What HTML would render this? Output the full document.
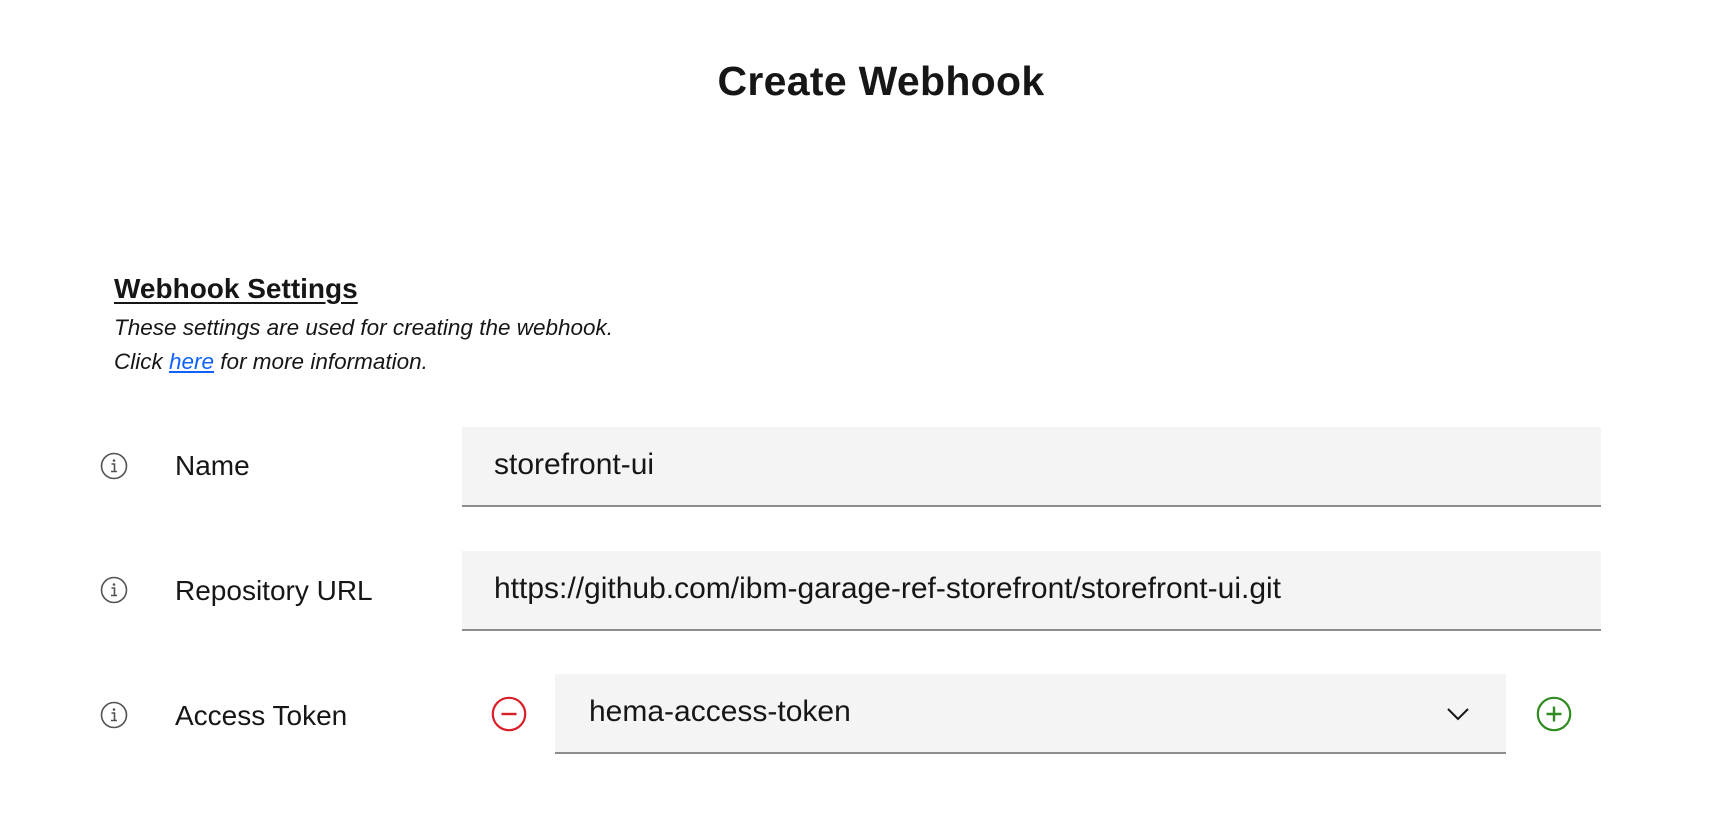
<!DOCTYPE html>
<html><head><meta charset="utf-8"><style>
html,body{margin:0;padding:0;background:#fff;width:1731px;height:828px;overflow:hidden;font-family:"Liberation Sans",sans-serif;color:#161616}
.a{position:absolute}
h1{position:absolute;margin:0;left:0;width:1762px;text-align:center;top:58px;font-size:41px;font-weight:bold;letter-spacing:0.3px}
.h2{left:114px;top:273px;font-size:28px;font-weight:bold;text-decoration:underline;text-underline-offset:4px}
.it{left:114px;font-size:22.5px;font-style:italic}
.it a{color:#0f62fe;text-decoration:underline}
.field{background:#f4f4f4;border-bottom:2px solid #8d8d8d;box-sizing:border-box;font-size:30px;line-height:76px}
.lbl{left:175px;font-size:28px}
</style></head><body>
<h1>Create Webhook</h1>
<div class="a h2">Webhook Settings</div>
<div class="a it" style="top:315px">These settings are used for creating the webhook.</div>
<div class="a it" style="top:349px">Click <a>here</a> for more information.</div>

<svg class="a" style="left:100px;top:452px" width="28" height="28" viewBox="0 0 28 28"><circle cx="14" cy="14" r="12.5" fill="none" stroke="#525252" stroke-width="1.6"/><circle cx="14" cy="8.5" r="1.3" fill="#525252"/><path d="M11.5 12h3v7.5M11 19.5h6" fill="none" stroke="#525252" stroke-width="1.6"/></svg>
<div class="a lbl" style="top:450px">Name</div>
<div class="a field" style="left:462px;top:427px;width:1139px;height:80px;padding-left:32px">storefront-ui</div>

<svg class="a" style="left:100px;top:576px" width="28" height="28" viewBox="0 0 28 28"><circle cx="14" cy="14" r="12.5" fill="none" stroke="#525252" stroke-width="1.6"/><circle cx="14" cy="8.5" r="1.3" fill="#525252"/><path d="M11.5 12h3v7.5M11 19.5h6" fill="none" stroke="#525252" stroke-width="1.6"/></svg>
<div class="a lbl" style="top:575px">Repository URL</div>
<div class="a field" style="left:462px;top:551px;width:1139px;height:80px;padding-left:32px">https://github.com/ibm-garage-ref-storefront/storefront-ui.git</div>

<svg class="a" style="left:100px;top:701px" width="28" height="28" viewBox="0 0 28 28"><circle cx="14" cy="14" r="12.5" fill="none" stroke="#525252" stroke-width="1.6"/><circle cx="14" cy="8.5" r="1.3" fill="#525252"/><path d="M11.5 12h3v7.5M11 19.5h6" fill="none" stroke="#525252" stroke-width="1.6"/></svg>
<div class="a lbl" style="top:700px">Access Token</div>
<svg class="a" style="left:491px;top:696px" width="36" height="36" viewBox="0 0 36 36"><circle cx="18" cy="18" r="16.2" fill="none" stroke="#da1e28" stroke-width="2.2"/><path d="M10.5 18h15" stroke="#da1e28" stroke-width="2.4"/></svg>
<div class="a field" style="left:555px;top:674px;width:951px;height:80px;padding-left:34px">hema-access-token</div>
<svg class="a" style="left:1446px;top:706px" width="24" height="16" viewBox="0 0 24 16"><path d="M2 3l10 10 10-10" fill="none" stroke="#161616" stroke-width="2"/></svg>
<svg class="a" style="left:1536px;top:696px" width="36" height="36" viewBox="0 0 36 36"><circle cx="18" cy="18" r="16.2" fill="none" stroke="#2e8b1f" stroke-width="2.2"/><path d="M10.5 18h15M18 10.5v15" stroke="#2e8b1f" stroke-width="2.4"/></svg>
</body></html>
